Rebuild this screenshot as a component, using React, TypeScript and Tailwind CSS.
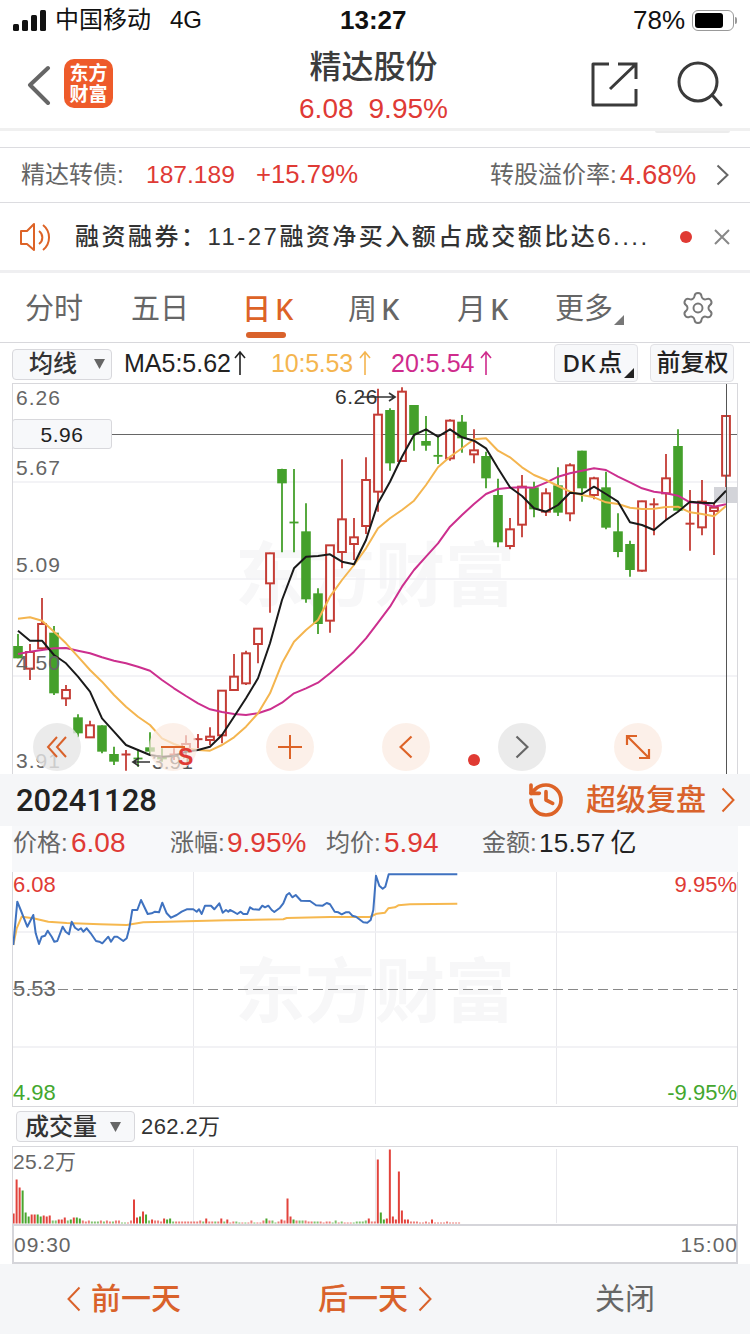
import React from "react";
import { Settings, History } from "lucide-react";

type C = [number, number, number, number, "r" | "g"];
const candles: C[] = [
  [762, 798, 835, 835, "g"], [792, 816, 866, 900, "r"], [654, 732, 805, 806, "r"], [738, 758, 940, 945, "g"], [915, 930, 955, 978, "r"],
  [1003, 1012, 1060, 1072, "g"], [1022, 1036, 1072, 1072, "r"], [1036, 1036, 1115, 1120, "g"], [1100, 1122, 1145, 1155, "g"], [1110, 1122, 1125, 1172, "r"],
  [1108, 1134, 1137, 1160, "g"], [1057, 1102, 1115, 1125, "g"], [1105, 1130, 1138, 1145, "g"], [1105, 1122, 1125, 1140, "r"], [1066, 1092, 1110, 1125, "r"],
  [1062, 1076, 1079, 1105, "r"], [1042, 1070, 1080, 1095, "r"], [930, 932, 1066, 1090, "r"], [822, 890, 930, 930, "r"], [812, 820, 910, 915, "r"],
  [745, 746, 792, 850, "r"], [518, 520, 610, 698, "r"], [266, 267, 310, 517, "g"], [267, 426, 429, 517, "g"], [370, 454, 658, 668, "g"],
  [625, 640, 732, 762, "g"], [495, 496, 722, 758, "r"], [238, 418, 516, 565, "r"], [414, 472, 492, 540, "r"], [232, 300, 438, 462, "r"],
  [26, 104, 335, 395, "r"], [85, 90, 250, 272, "g"], [22, 35, 243, 243, "r"], [75, 75, 165, 212, "g"], [108, 183, 197, 212, "g"],
  [170, 226, 229, 252, "g"], [118, 122, 235, 242, "r"], [105, 125, 175, 218, "g"], [148, 211, 223, 250, "r"], [215, 228, 295, 325, "g"],
  [296, 345, 487, 502, "g"], [414, 448, 498, 508, "r"], [285, 320, 434, 472, "r"], [305, 322, 388, 412, "g"], [325, 340, 395, 408, "r"],
  [262, 316, 398, 408, "g"], [250, 256, 400, 424, "r"], [212, 212, 325, 365, "g"], [290, 295, 345, 358, "r"], [275, 322, 443, 448, "g"],
  [400, 454, 516, 532, "g"], [482, 492, 570, 590, "g"], [362, 364, 572, 575, "r"], [355, 370, 376, 466, "r"], [222, 295, 340, 420, "r"],
  [148, 198, 392, 392, "g"], [330, 428, 434, 512, "r"], [300, 365, 442, 466, "r"], [370, 383, 393, 525, "r"], [108, 108, 287, 325, "r"],
];

const ma5 = [752, 782, 782, 825, 850, 890, 935, 1015, 1055, 1095, 1110, 1125, 1130, 1128, 1115, 1110, 1100, 1065, 1010, 955, 895, 790, 660, 565, 530, 528, 523, 545, 553, 480, 370, 305, 230, 165, 148, 170, 148, 172, 182, 205, 265, 322, 348, 385, 395, 375, 338, 342, 320, 342, 365, 427, 435, 450, 420, 395, 365, 368, 370, 332];
const ma10 = [716, 712, 722, 755, 790, 830, 870, 905, 945, 980, 1010, 1035, 1075, 1092, 1105, 1110, 1112, 1095, 1072, 1040, 1000, 940, 850, 785, 750, 720, 650, 600, 555, 505, 445, 415, 390, 362, 315, 262, 230, 205, 178, 175, 212, 232, 262, 285, 300, 318, 335, 345, 352, 367, 372, 383, 387, 386, 381, 380, 397, 402, 409, 378];
const ma20 = [822, 815, 810, 805, 804, 812, 820, 832, 842, 850, 860, 872, 900, 925, 948, 970, 988, 996, 1002, 1005, 1000, 988, 968, 940, 925, 908, 880, 848, 815, 775, 728, 680, 620, 570, 530, 490, 440, 405, 372, 342, 327, 323, 322, 323, 308, 290, 280, 272, 265, 270, 290, 307, 325, 335, 340, 347, 367, 370, 380, 373];

const linePts = (a: number[]) => a.map((y, i) => `${18 + 12 * i},${(380 + y / 3).toFixed(1)}`).join(" ");

const blue7 = [[40,240],[52,110],[62,135],[72,160],[82,185],[100,150],[107,205],[117,237],[125,215],[135,212],[143,197],[155,215],[163,230],[172,228],[188,185],[197,200],[207,208],[215,170],[225,188],[235,195],[243,190],[250,200],[260,190],[272,205],[288,228],[298,230],[307,235],[325,215],[333,230],[343,215],[352,215],[370,228],[380,220],[388,190],[397,135],[412,135],[423,105],[443,147],[455,145],[465,140],[477,142],[487,113],[500,145],[513,158],[530,150],[545,140],[560,133],[580,133],[590,140],[597,133],[605,147],[615,122],[633,122],[643,133],[658,115],[668,143],[678,135],[685,140]];
const blue8 = [[0,135],[10,140],[22,147],[32,140],[40,147],[52,147],[60,127],[70,133],[88,134],[97,122],[105,127],[115,122],[125,135],[133,141],[150,128],[160,115],[170,90],[178,84],[187,97],[197,90],[213,107],[240,108],[258,121],[278,122],[290,114],[300,118],[314,140],[325,142],[335,148],[347,142],[358,142],[367,152],[378,155],[400,172],[412,173],[422,165],[430,135],[438,32],[448,62],[458,71],[466,65],[476,28],[682,28]];
const or7 = [[40,240],[50,190],[65,155],[100,160],[145,170],[200,174],[300,178],[380,180],[430,172],[500,170],[680,166]];
const or8 = [[0,166],[160,163],[170,159],[300,156],[420,156],[440,146],[465,143],[475,130],[495,127],[505,121],[540,118],[682,116]];
const pts = (a: number[][], b: number[][]) =>
  [...a.map(([x, y]) => `${(x / 3).toFixed(1)},${(865 + y / 3).toFixed(1)}`), ...b.map(([x, y]) => `${(230 + x / 3).toFixed(1)},${(865 + y / 3).toFixed(1)}`)].join(" ");

// positive = red, negative = green
const vol = [10,44,36,-33,-11,-7,9,9,-9,-7,8,7,8,-3,-3,4,4,6,-3,-4,6,-6,-5,3,2,3,-2,-2,-2,3,-2,3,2,-2,3,3,-1,-1,1,3,24,6,-7,12,-9,-3,4,3,3,2,5,-4,-5,-2,2,2,2,2,2,2,2,2,3,-2,5,2,2,-2,2,5,-2,4,1,
  2,-2,-1,1,-1,1,3,-1,1,1,3,-5,3,-3,-1,2,4,3,25,7,-4,3,-3,-3,3,2,2,-2,-2,2,1,2,2,-1,-3,1,-2,1,1,1,-1,-2,-2,-2,-3,5,2,2,64,-11,-4,5,74,7,4,52,13,4,4,2,2,2,1,1,2,1,4,1,1,1,1,2,1,1,1,1];

const Tri = ({ cls }: { cls: string }) => (
  <svg width="10" height="10" viewBox="0 0 10 10" className={cls}><polygon points="10,0 10,10 0,10" fill="currentColor" /></svg>
);
const Down = ({ cls }: { cls: string }) => (
  <svg width="11" height="10" viewBox="0 0 11 10" className={cls}><polygon points="0,0 11,0 5.5,10" fill="#666" /></svg>
);
const UpArrow = ({ color }: { color: string }) => (
  <svg width="14" height="26" viewBox="0 0 14 26" className="block">
    <path d="M7 25V2M2 8L7 2L12 8" fill="none" stroke={color} strokeWidth="1.6" />
  </svg>
);
const Chev = ({ dir, color, w = 14, h = 24, sw = 2 }: { dir: "l" | "r"; color: string; w?: number; h?: number; sw?: number }) => (
  <svg width={w} height={h} viewBox={`0 0 ${w} ${h}`} className="block">
    <path d={dir === "r" ? `M1.5 1.5L${w - 1.5} ${h / 2}L1.5 ${h - 1.5}` : `M${w - 1.5} 1.5L1.5 ${h / 2}L${w - 1.5} ${h - 1.5}`} fill="none" stroke={color} strokeWidth={sw} />
  </svg>
);
const Round = ({ x, gray, children }: { x: string; gray?: boolean; children?: React.ReactNode }) => (
  <div className={`absolute top-[339px] size-[48px] rounded-full flex items-center justify-center ${x} ${gray ? "bg-[#e6e6e6]/80" : "bg-[#fbeadf]/70"}`}>{children}</div>
);
const K = () => <span className="ml-[4px] font-medium [font-family:'Noto_Sans',sans-serif]">K</span>;

export default function App() {
  return (
    <div className="relative w-[750px] h-[1334px] overflow-hidden bg-white flex flex-col text-[#333] [font-family:'Liberation_Sans','Noto_Sans_CJK_SC',sans-serif]">
      {/* status bar */}
      <div className="h-[40px] shrink-0 relative flex items-center text-[24px] text-[#111] leading-none">
        <svg width="34" height="22" viewBox="0 0 34 22" className="ml-[13px] mt-[2px]">
          <rect x="0" y="14" width="6" height="7" rx="1.5" fill="#111" />
          <rect x="9" y="10" width="6" height="11" rx="1.5" fill="#111" />
          <rect x="18" y="5" width="6" height="16" rx="1.5" fill="#111" />
          <rect x="27" y="0" width="6" height="21" rx="1.5" fill="#111" />
        </svg>
        <span className="ml-[8px] w-[115px]">中国移动</span>
        <span>4G</span>
        <span className="ml-[138px] font-bold text-[26px] w-[293px]">13:27</span>
        <span className="text-[26px]">78%</span>
        <div className="ml-[7px] w-[42px] h-[21px] rounded-[6px] border-[1.5px] border-[#999] p-[2px] pr-[10px]"><div className="w-full h-full rounded-[3px] bg-black" /></div>
        <div className="w-[2px] h-[7px] bg-[#999] ml-[1px] rounded-r" />
      </div>
      {/* nav */}
      <div className="h-[88px] shrink-0 relative flex items-start">
        <svg width="28" height="40" viewBox="0 0 28 40" className="ml-[25px] mt-[25px]"><path d="M23 3L5 20L23 38" fill="none" stroke="#666" strokeWidth="4" strokeLinecap="round" strokeLinejoin="round" /></svg>
        <div className="ml-[11px] mt-[19px] w-[49px] h-[49px] rounded-[10px] bg-[#ee5b2a] text-white font-bold text-[19px] leading-[21px] flex flex-col items-center justify-center">
          <span>东方</span><span>财富</span>
        </div>
        <div className="flex-1 flex flex-col items-center ml-[51px]">
          <div className="text-[32px] leading-[40px] font-medium text-[#3c3c3c] mt-[7px]">精达股份</div>
          <div className="text-[28px] leading-[30px] text-[#df3a35] mt-[7px] flex gap-[15px]"><span>6.08</span><span>9.95%</span></div>
        </div>
        <svg width="48" height="48" viewBox="0 0 48 48" className="mt-[21px] ml-[8px]">
          <path d="M18 3H2V44H45V28" fill="none" stroke="#3a3a3a" strokeWidth="3" strokeLinejoin="round" />
          <path d="M27 3H45V18M44 4L19 28" fill="none" stroke="#3a3a3a" strokeWidth="3" />
        </svg>
        <svg width="50" height="52" viewBox="0 0 50 52" className="mt-[20px] ml-[37px] mr-[24px]">
          <circle cx="22" cy="22" r="19" fill="none" stroke="#3a3a3a" strokeWidth="3" />
          <path d="M37 36L45 45" fill="none" stroke="#3a3a3a" strokeWidth="3" strokeLinecap="round" />
        </svg>
      </div>
      {/* scrolled strip */}
      <div className="h-[19px] shrink-0 relative border-t-[3px] border-[#f0f0f0]">
        <div className="absolute left-[655px] top-0 w-[75px] h-[2px] bg-[#ececec] rounded-b" />
      </div>
      {/* convertible */}
      <div className="h-[56px] shrink-0 border-t border-b border-[#dcdce0] flex items-center text-[24px] leading-none text-[#666]">
        <span className="ml-[21px] w-[125px]">精达转债:</span>
        <span className="text-[#df3a35] w-[110px] text-[24.6px]">187.189</span>
        <span className="text-[#df3a35] text-[25.7px] w-[234px]">+15.79%</span>
        <span>转股溢价率:</span>
        <span className="text-[#df3a35] text-[27px] ml-[3px] w-[96px]">4.68%</span>
        <Chev dir="r" color="#666" w={13} h={22} />
      </div>
      {/* notice */}
      <div className="h-[70px] shrink-0 border-b-[3px] border-[#efeff1] flex items-center">
        <svg width="34" height="34" viewBox="0 0 34 34" className="ml-[19px]">
          <path d="M2 11H8L15 4V30L8 24H2Z" fill="none" stroke="#dd6327" strokeWidth="2" strokeLinejoin="round" />
          <path d="M20 11A8 8 0 0 1 20 24M24 5A16 16 0 0 1 24 30" fill="none" stroke="#dd6327" strokeWidth="2" />
        </svg>
        <span className="ml-[22px] w-[600px] text-[24px] font-medium text-[#333] tracking-[2.48px] leading-none whitespace-nowrap">融资融券：11-27融资净买入额占成交额比达6....</span>
        <div className="ml-[5px] size-[12px] rounded-full bg-[#e03a33]" />
        <svg width="18" height="18" viewBox="0 0 18 18" className="ml-[21px]"><path d="M2 2L16 16M16 2L2 16" stroke="#888" strokeWidth="2" /></svg>
      </div>
      {/* tabs */}
      <div className="h-[70px] shrink-0 relative flex items-center border-b border-[#d8d8dc] text-[29px] leading-none text-[#666] pt-[3px]">
        <span className="ml-[25px] w-[106px]">分时</span>
        <span className="w-[111px]">五日</span>
        <span className="w-[106px] text-[#dd6327] font-medium relative">日<K />
          <span className="absolute left-[4px] top-[38px] w-[40px] h-[6px] rounded-full bg-[#d9622b]" />
        </span>
        <span className="w-[109px]">周<K /></span>
        <span className="w-[98px]">月<K /></span>
        <span className="w-[68px]">更多</span>
        <Tri cls="text-[#777] mt-[22px] -ml-[9px]" />
        <Settings size={36} strokeWidth={1.3} className="text-[#777] ml-[56px] -mt-[3px]" />
      </div>
      {/* toolbar */}
      <div className="h-[40px] shrink-0 flex items-center text-[24px] leading-none">
        <div className="ml-[12px] w-[100px] h-[31px] mt-[2px] rounded-[4px] border border-[#d8d8dc] bg-[#f7f8fa] flex items-center font-medium text-[#333] pl-[16px]">
          <span>均线</span><Down cls="ml-[17px]" />
        </div>
        <span className="ml-[12px] text-[#222] text-[25px]">MA5:5.62</span>
        <div className="ml-[2px]"><UpArrow color="#222" /></div>
        <span className="ml-[24px] text-[#f4b54f] text-[25px] -tracking-[0.2px]">10:5.53</span>
        <div className="ml-[5px]"><UpArrow color="#f4b54f" /></div>
        <span className="ml-[19px] text-[#cf2b8c] text-[25px]">20:5.54</span>
        <div className="ml-[5px]"><UpArrow color="#cf2b8c" /></div>
        <div className="ml-[61px] w-[84px] h-[38px] rounded-[4px] border border-[#e2e2e6] bg-[#f7f8fa] relative flex items-center justify-center font-medium text-[#222] pr-[8px]">
          <span className="[font-family:'Noto_Sans',sans-serif] mr-[3px]">DK</span>点
          <Tri cls="absolute right-[3px] bottom-[3px] text-[#222]" />
        </div>
        <div className="ml-[12px] w-[84px] h-[38px] rounded-[4px] border border-[#e2e2e6] bg-[#f7f8fa] flex items-center justify-center font-medium text-[#222]">前复权</div>
      </div>
      {/* K chart */}
      <div className="relative ml-[12px] w-[726px] h-[391px] shrink-0 border-l border-r border-t border-[#d8d8dc] box-border">
        <div className="absolute left-[222px] top-[153px] text-[70px] leading-[80px] font-bold text-[#f7f7f8] whitespace-nowrap">东方财富</div>
        <svg width="724" height="390" viewBox="13 384 724 390" className="absolute left-0 top-0 block">
          <path d="M13 482H737M13 579H737M13 676H737" stroke="#f0f0f4" strokeWidth="1.5" />
          <path d="M112 434.5H737" stroke="#666" strokeWidth="1" />
          {candles.map(([hi, t, b, lo, k], i) => {
            const x = 18 + 12 * i;
            const Y = (z: number) => 380 + z / 3;
            const col = k === "r" ? "#c43c35" : "#44a02b";
            if (k === "g") {
              return (
                <g key={i}>
                  <path d={`M${x} ${Y(hi)}V${Y(lo)}`} stroke={col} strokeWidth="1.8" />
                  {b - t < 6
                    ? <path d={`M${x - 4.5} ${Y((t + b) / 2)}H${x + 4.5}`} stroke={col} strokeWidth="1.8" />
                    : <rect x={x - 4.8} y={Y(t)} width={9.6} height={(b - t) / 3} fill={col} />}
                </g>
              );
            }
            if (b - t < 8) {
              return (
                <g key={i}>
                  <path d={`M${x} ${Y(hi)}V${Y(lo)}`} stroke={col} strokeWidth="1.8" />
                  <path d={`M${x - 4.5} ${Y((t + b) / 2)}H${x + 4.5}`} stroke={col} strokeWidth="2" />
                </g>
              );
            }
            return (
              <g key={i}>
                <path d={`M${x} ${Y(hi)}V${Y(t)}M${x} ${Y(b)}V${Y(lo)}`} stroke={col} strokeWidth="1.8" />
                <rect x={x - 3.9} y={Y(t)} width={7.8} height={(b - t) / 3} fill="white" fillOpacity="0.9" stroke={col} strokeWidth="2" />
              </g>
            );
          })}
          <rect x="714" y="487" width="23" height="16" fill="#d3d4d9" />
          <polyline points={linePts(ma20)} fill="none" stroke="#cc2f8e" strokeWidth="2" strokeLinejoin="round" />
          <polyline points={linePts(ma10)} fill="none" stroke="#f4b54f" strokeWidth="2" strokeLinejoin="round" />
          <polyline points={linePts(ma5)} fill="none" stroke="#1a1a1a" strokeWidth="2" strokeLinejoin="round" />
          <path d="M726.5 384V774" stroke="#555" strokeWidth="1" />
          <path d="M360 397H394M389 393L395 397L389 401" fill="none" stroke="#333" strokeWidth="1.7" />
          <path d="M134 762H150M139 758L133 762L139 766" fill="none" stroke="#333" strokeWidth="1.7" />
        </svg>
        {[["6.26", 3], ["5.67", 73], ["5.09", 170], ["4.50", 268], ["3.91", 366]].map(([t, y]) => (
          <span key={t as string} style={{ top: y as number }} className="absolute left-[3px] text-[21px] leading-[22px] tracking-[1px] text-[#666]">{t}</span>
        ))}
        <span className="absolute left-[322px] top-[2px] text-[21px] leading-[22px] text-[#333] tracking-[0.5px]">6.26</span>
        <span className="absolute left-[139px] top-[367px] text-[21px] leading-[22px] text-[#555]">3.91</span>
        <div className="absolute -left-px top-[35px] w-[100px] h-[30px] rounded-[3px] border border-[#d8d8dc] bg-[#f7f8fa] flex items-center justify-center text-[21px] leading-none text-[#222] tracking-[0.5px]">5.96</div>
        <Round x="left-[20px]" gray>
          <svg width="22" height="24" viewBox="0 0 22 24"><path d="M11 2L2 12L11 22M20 2L11 12L20 22" fill="none" stroke="#d9622b" strokeWidth="2" /></svg>
        </Round>
        <Round x="left-[136px]">
          <svg width="24" height="4" viewBox="0 0 24 4"><path d="M0 2H24" stroke="#dd6327" strokeWidth="2" /></svg>
        </Round>
        <Round x="left-[253px]">
          <svg width="24" height="24" viewBox="0 0 24 24"><path d="M0 12H24M12 0V24" stroke="#dd6327" strokeWidth="2" /></svg>
        </Round>
        <Round x="left-[369px]"><Chev dir="l" color="#dd6327" w={14} h={24} sw={2.2} /></Round>
        <Round x="left-[485px]" gray><Chev dir="r" color="#666" w={14} h={24} sw={2.2} /></Round>
        <Round x="left-[601px]">
          <svg width="26" height="26" viewBox="0 0 26 26"><path d="M2 2L24 24M2 11V2H12M24 15V24H14" fill="none" stroke="#dd6327" strokeWidth="2.2" /></svg>
        </Round>
        <span className="absolute left-[165px] top-[361px] text-[23px] leading-[24px] font-bold text-[#e03a33]">S</span>
        <div className="absolute left-[455px] top-[370px] size-[12px] rounded-full bg-[#e03a33]" />
      </div>
      {/* date bar */}
      <div className="h-[52px] shrink-0 bg-[#f5f6f8] flex items-center">
        <span className="ml-[16px] w-[510px] text-[31px] leading-none font-medium text-[#222] [font-family:Roboto,'Liberation_Sans',sans-serif]">20241128</span>
        <History size={40} strokeWidth={2.2} className="text-[#dd6327]" />
        <span className="ml-[20px] text-[30px] leading-none font-medium text-[#d9622b]">超级复盘</span>
        <div className="ml-[15px]"><Chev dir="r" color="#dd6327" w={14} h={26} sw={2} /></div>
      </div>
      {/* stats */}
      <div className="ml-[12px] w-[726px] h-[46px] shrink-0 bg-[#f7f8fa] flex items-center pb-[12px] text-[24px] leading-none text-[#666] whitespace-nowrap">
        <span className="ml-[1px] w-[58px]">价格:</span><span className="text-[#df3a35] text-[28px] w-[99px]">6.08</span>
        <span className="w-[57px]">涨幅:</span><span className="text-[#df3a35] text-[28px] w-[99px]">9.95%</span>
        <span className="w-[58px]">均价:</span><span className="text-[#df3a35] text-[28px] w-[98px]">5.94</span>
        <span className="w-[57px]">金额:</span><span className="text-[#222] text-[26px] tracking-[0.3px]">15.57</span><span className="ml-[5px] text-[#222] text-[26px]">亿</span>
      </div>
      {/* intraday */}
      <div className="relative ml-[12px] w-[726px] h-[235px] shrink-0 border-l border-r border-b border-[#d8d8dc] box-border">
        <div className="absolute left-[222px] top-[81px] text-[70px] leading-[80px] font-bold text-[#f7f7f8] whitespace-nowrap">东方财富</div>
        <svg width="724" height="234" viewBox="13 872 724 234" className="absolute left-0 top-0 block">
          <path d="M193.5 872V1104M375.5 872V1104M556.5 872V1104" stroke="#e8e8ec" strokeWidth="1" />
          <path d="M13 932H737M13 1047H737" stroke="#eeeef2" strokeWidth="1.5" />
          <path d="M13 989.5H737" stroke="#888" strokeWidth="1" strokeDasharray="10 5" />
          <polyline points={pts(or7, or8)} fill="none" stroke="#f6b84f" strokeWidth="2" strokeLinejoin="round" />
          <polyline points={pts(blue7, blue8)} fill="none" stroke="#3f72c0" strokeWidth="2" strokeLinejoin="round" />
        </svg>
        <span className="absolute left-0 top-[2px] text-[22px] leading-[22px] text-[#df3a35]">6.08</span>
        <span className="absolute right-0 top-[2px] text-[22px] leading-[22px] text-[#df3a35]">9.95%</span>
        <span className="absolute left-0 top-[106px] text-[22px] leading-[22px] text-[#666]">5.53</span>
        <span className="absolute left-0 top-[210px] text-[22px] leading-[22px] text-[#44a72f]">4.98</span>
        <span className="absolute right-0 top-[210px] text-[22px] leading-[22px] text-[#44a72f]">-9.95%</span>
      </div>
      {/* volume header */}
      <div className="h-[39px] shrink-0 flex items-center">
        <div className="ml-[16px] w-[119px] h-[31px] rounded-[4px] border border-[#d8d8dc] bg-[#f7f8fa] flex items-center pl-[8px] text-[24px] leading-none font-medium text-[#333]">
          <span>成交量</span><Down cls="ml-[13px]" />
        </div>
        <span className="ml-[6px] text-[22px] tracking-[0.4px] leading-none text-[#333]">262.2万</span>
      </div>
      {/* volume chart */}
      <div className="relative ml-[12px] w-[726px] h-[78px] shrink-0 border-l border-r border-t border-[#d8d8dc] box-border">
        <svg width="724" height="77" viewBox="13 1147 724 77" className="absolute left-0 top-0 block">
          <path d="M193.5 1149V1223M375.5 1149V1223M556.5 1149V1223" stroke="#e8e8ec" strokeWidth="1" />
          {vol.map((v, i) => {
            const h = Math.abs(v);
            return <rect key={i} x={12.6 + 3.01 * i} y={1223.5 - h} width={2} height={h} fill={v > 0 ? "#e2433c" : "#4aa52e"} opacity={h < 4 ? 0.7 : 1} />;
          })}
        </svg>
        <span className="absolute left-0 top-[4px] text-[21px] leading-[22px] text-[#666] tracking-[0.3px]">25.2万</span>
      </div>
      {/* time axis */}
      <div className="ml-[12px] w-[726px] h-[40px] shrink-0 border-2 border-[#d5d5da] box-border flex items-center justify-between text-[21px] leading-none tracking-[1px] text-[#666]">
        <span>09:30</span><span className="-mr-[2px]">15:00</span>
      </div>
      {/* bottom bar */}
      <div className="flex-1 bg-[#f5f6f8] flex items-center text-[30px] leading-none">
        <div className="ml-[67px]"><Chev dir="l" color="#d9622b" w={14} h={26} sw={2} /></div>
        <span className="ml-[10px] w-[227px] font-medium text-[#d9622b]">前一天</span>
        <span className="font-medium text-[#d9622b] w-[90px]">后一天</span>
        <div className="ml-[10px]"><Chev dir="r" color="#d9622b" w={14} h={26} sw={2} /></div>
        <span className="ml-[163px] text-[#666]">关闭</span>
      </div>
    </div>
  );
}
